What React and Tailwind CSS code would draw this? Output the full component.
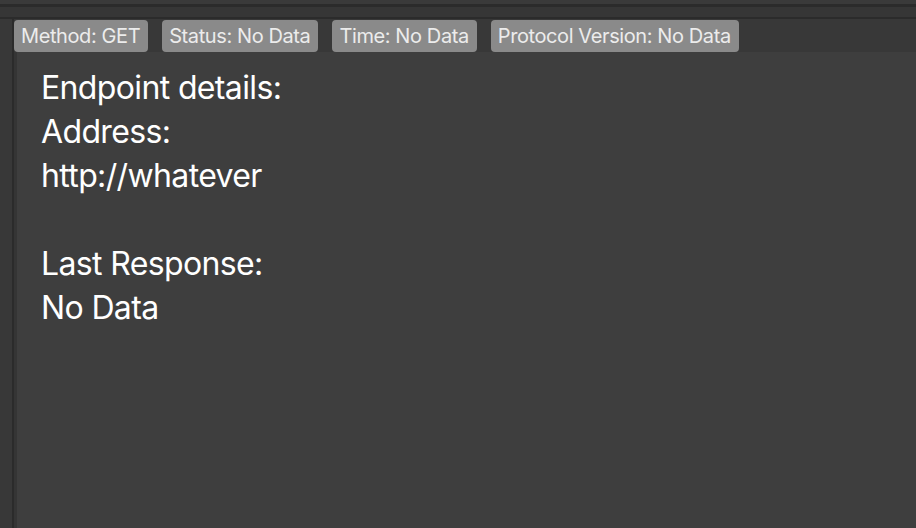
import React from "react";

const tags = ["Method: GET", "Status: No Data", "Time: No Data", "Protocol Version: No Data"];

export default function App() {
  return (
    <div
      className="w-[916px] h-[528px] flex flex-col bg-[#383838] overflow-hidden"
      style={{ fontFamily: "Inter, 'Noto Sans', sans-serif" }}
    >
      <div className="h-[4px] bg-[#3a3a3a]" />
      <div className="h-[3px] bg-[#2b2b2b]" />
      <div className="h-[10px] bg-[#363636]" />
      <div className="h-[2px] bg-[#2b2b2b]" />
      <div className="flex flex-1">
        <div className="w-[12px] bg-[#383838]" />
        <div className="w-[2px] bg-[#2b2b2b]" />
        <div className="flex flex-col flex-1">
          <div className="flex gap-[14px] h-[33px] pt-[1px]">
            {tags.map((t) => (
              <span
                key={t}
                className="h-[32px] pl-[7px] pr-[8px] flex items-center rounded-[4px] bg-[#8a8a8a] text-[#ececec] text-[20px] tracking-[-0.02em]"
              >
                {t}
              </span>
            ))}
          </div>
          <div className="flex-1 bg-[#3e3e3e] border-l-[3px] border-[#353535] pl-[24px] pt-[14px] text-white text-[32px] leading-[44px] tracking-[-0.02em]">
            <div>Endpoint details:</div>
            <div>Address:</div>
            <div>http://whatever</div>
            <div>&nbsp;</div>
            <div>Last Response:</div>
            <div>No Data</div>
          </div>
        </div>
      </div>
    </div>
  );
}
